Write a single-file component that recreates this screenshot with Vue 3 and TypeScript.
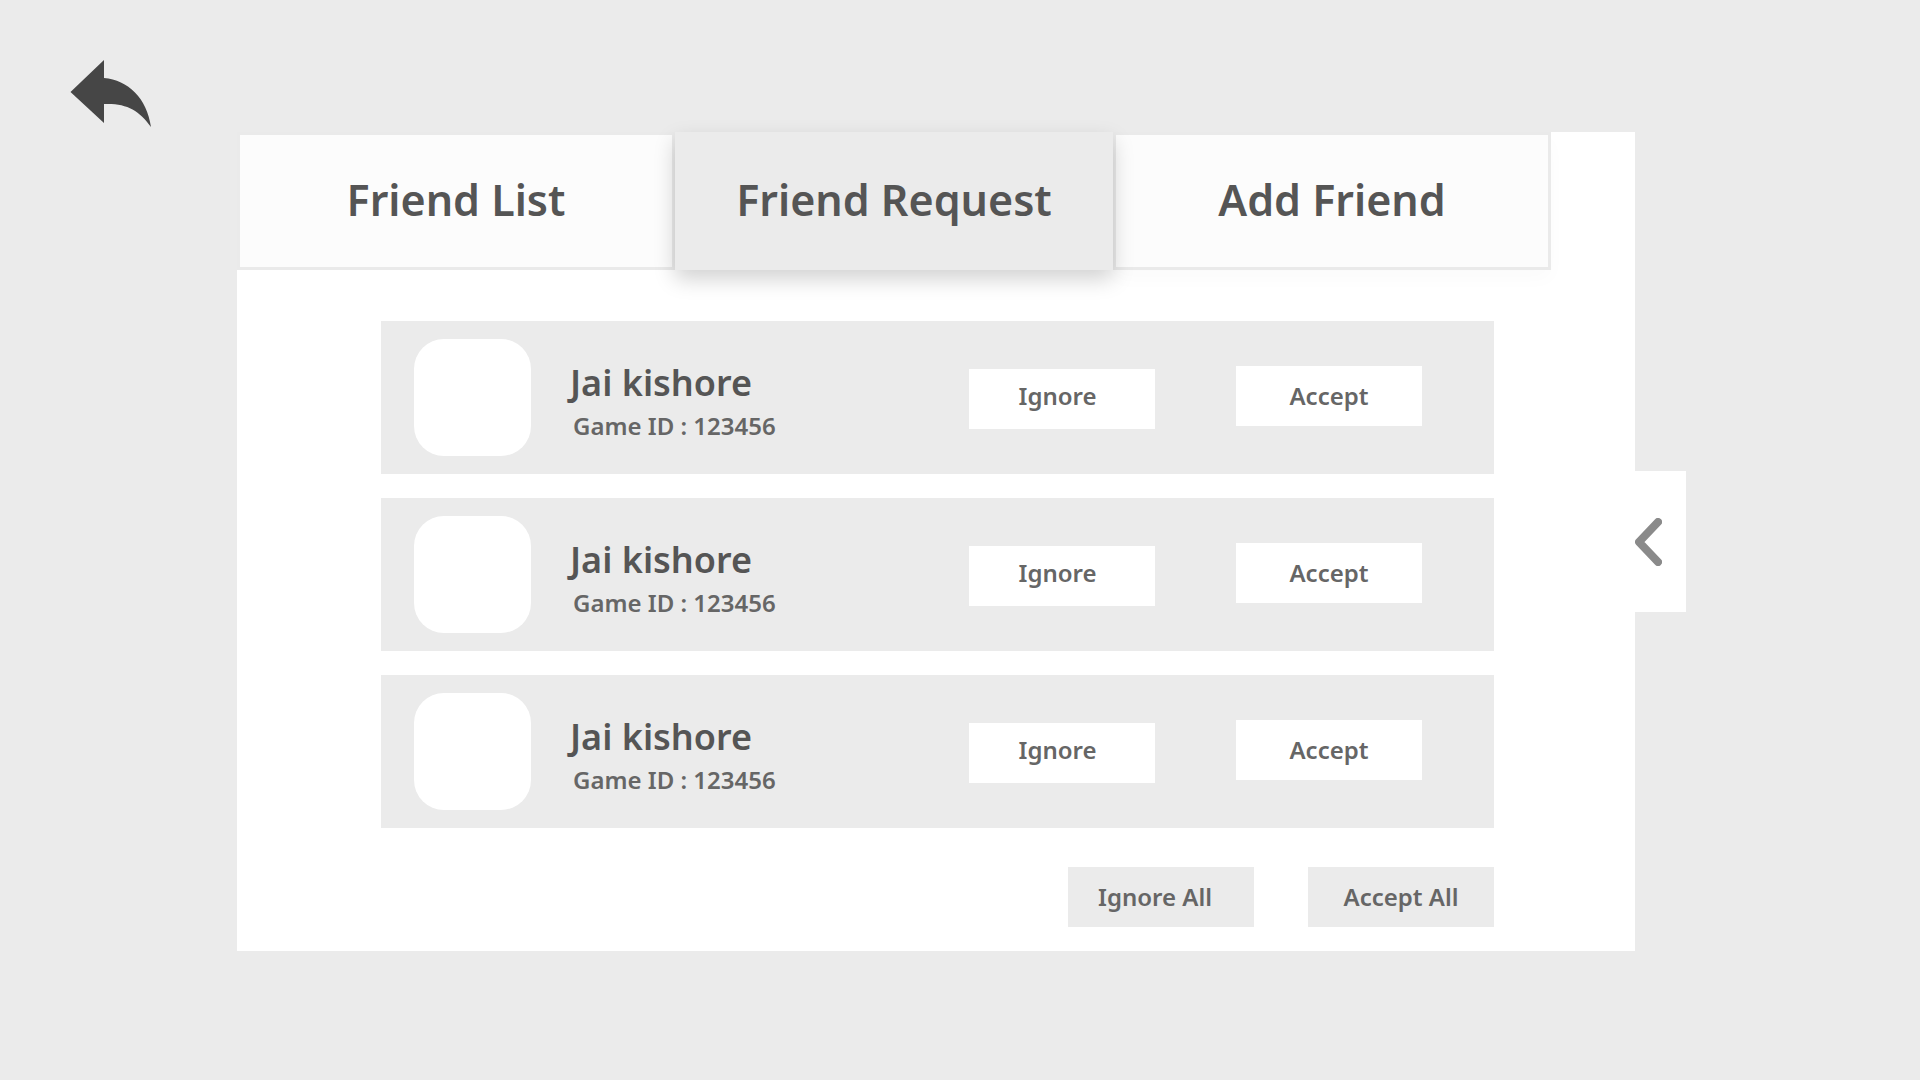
<script setup lang="ts">
import { ref } from 'vue'

interface Player {
  key: number
  name: string
  gameId: string
}

const tabs: string[] = ['Friend List', 'Friend Request', 'Add Friend']
const activeTab = ref('Friend Request')

const requests = ref<Player[]>([
  { key: 1, name: 'Jai kishore', gameId: '123456' },
  { key: 2, name: 'Jai kishore', gameId: '123456' },
  { key: 3, name: 'Jai kishore', gameId: '123456' },
])

function resolve(key: number): void {
  requests.value = requests.value.filter((player) => player.key !== key)
}

function resolveAll(): void {
  requests.value = []
}
</script>

<template>
  <div class="screen">
    <nav class="side">
      <button class="back" type="button" aria-label="Back">
        <svg width="82" height="68" viewBox="0 0 82 68" aria-hidden="true">
          <path d="M0.5 32 L34 0 V18 C58 20 77 38 81 67 C69 50 56 43 34 44 V63 Z" fill="#464646" />
        </svg>
      </button>
    </nav>

    <main class="panel">
      <div class="tabs" role="tablist">
        <button
          v-for="tab in tabs"
          :key="tab"
          class="tab"
          :class="{ active: tab === activeTab }"
          type="button"
          role="tab"
          :aria-selected="tab === activeTab"
          @click="activeTab = tab"
        >
          {{ tab }}
        </button>
      </div>

      <section class="content">
        <ul class="requests">
          <li v-for="player in requests" :key="player.key" class="request">
            <div class="avatar"></div>
            <div class="info">
              <div class="name">{{ player.name }}</div>
              <div class="game-id">Game ID : {{ player.gameId }}</div>
            </div>
            <div class="actions">
              <button class="action ignore" type="button" @click="resolve(player.key)">Ignore</button>
              <button class="action" type="button" @click="resolve(player.key)">Accept</button>
            </div>
          </li>
        </ul>

        <div class="bulk">
          <button class="action bulk-ignore" type="button" @click="resolveAll">Ignore All</button>
          <button class="action" type="button" @click="resolveAll">Accept All</button>
        </div>
      </section>
    </main>

    <button class="drawer" type="button" aria-label="Open side drawer">
      <svg width="27" height="48" viewBox="0 0 27 48" aria-hidden="true">
        <path d="M23 4 L4 24 L23 44" fill="none" stroke="#8a8a8a" stroke-width="8" stroke-linecap="round" stroke-linejoin="round" />
      </svg>
    </button>
  </div>
</template>

<style>
body {
  background: #ebebeb;
}
</style>

<style scoped>
.screen {
  display: flex;
  box-sizing: border-box;
  min-height: 100vh;
  padding-right: 234px;
  padding-bottom: 129px;
  align-items: flex-start;
  background: #ebebeb;
  color: #555555;
  font-family: 'Noto Sans', 'Open Sans', sans-serif;
  font-weight: 600;
}

button {
  margin: 0;
  padding: 0;
  border: 0;
  border-radius: 0;
  background: none;
  color: inherit;
  font: inherit;
  cursor: pointer;
}

.side {
  flex: 0 0 237px;
  box-sizing: border-box;
  padding: 60px 0 0 70px;
}

.back,
.back svg,
.drawer svg {
  display: block;
}

.panel {
  flex: 1;
  margin-top: 132px;
  background: #ffffff;
}

.tabs {
  display: flex;
  padding-right: 84px;
}

.tab {
  flex: 1;
  height: 138px;
  padding-bottom: 3px;
  border: 3px solid #eaeaea;
  background: #fcfcfc;
  font-size: 43px;
  line-height: 60px;
  white-space: nowrap;
}

.tab:last-child {
  box-shadow: 0 9px 18px rgba(0, 0, 0, 0.02);
}

.tab.active {
  position: relative;
  border-color: #ebebeb;
  background: #ebebeb;
  box-shadow: 0 9px 20px rgba(0, 0, 0, 0.18);
}

.content {
  padding: 51px 141px 24px 144px;
}

.requests {
  display: flex;
  flex-direction: column;
  gap: 24px;
  margin: 0;
  padding: 0;
  list-style: none;
}

.request {
  display: flex;
  align-items: center;
  padding: 18px 72px 18px 33px;
  background: #ebebeb;
}

.avatar {
  flex: none;
  width: 117px;
  height: 117px;
  border-radius: 30px;
  background: #ffffff;
}

.info {
  padding-top: 9px;
  margin-left: 39px;
}

.name {
  font-size: 36px;
  line-height: 48px;
}

.game-id {
  padding-left: 3px;
  color: #666666;
  font-size: 24px;
  line-height: 38px;
}

.actions {
  display: flex;
  gap: 81px;
  margin-left: auto;
  align-items: baseline;
}

.action {
  box-sizing: border-box;
  width: 186px;
  height: 60px;
  padding: 12px 0;
  background: #ffffff;
  color: #666666;
  font-size: 24px;
  line-height: 36px;
  white-space: nowrap;
}

.ignore {
  padding: 9px 9px 15px 0;
}

.bulk {
  display: flex;
  justify-content: flex-end;
  gap: 54px;
  margin-top: 39px;
}

.bulk .action {
  background: #ebebeb;
}

.bulk .bulk-ignore {
  padding-right: 12px;
}

.drawer {
  flex: 0 0 51px;
  height: 141px;
  margin-top: 132px;
  align-self: center;
  background: #ffffff;
}
</style>
